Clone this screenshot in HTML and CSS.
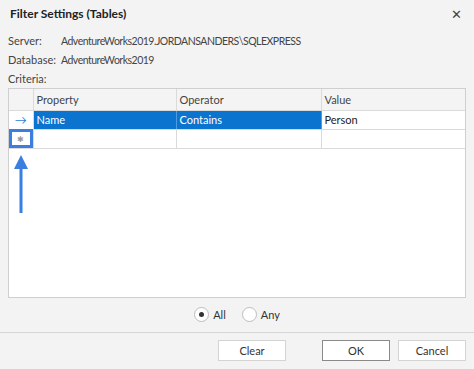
FILE: index.html
```html
<!DOCTYPE html>
<html lang="en">
  <head>
    <meta charset="UTF-8" />
    <meta name="viewport" content="width=device-width, initial-scale=1.0" />
    <title>Filter Settings (Tables)</title>
    <link rel="stylesheet" href="styles.css">
  </head>
  <body>
    <div id="dialog">
      <div class="titlebar">
        <span class="title">Filter Settings (Tables)</span>
        <span class="close">&#x2715;</span>
      </div>
      <div class="info">
        <div class="inforow"><span class="label">Server:</span><span class="value">AdventureWorks2019.JORDANSANDERS\SQLEXPRESS</span></div>
        <div class="inforow"><span class="label">Database:</span><span class="value">AdventureWorks2019</span></div>
        <div class="inforow"><span class="label">Criteria:</span></div>
      </div>

      <div class="grid">
        <table>
          <tr class="head">
            <td class="ind"></td>
            <td>Property</td>
            <td>Operator</td>
            <td>Value</td>
          </tr>
          <tr class="selected">
            <td class="ind arrow">&rarr;</td>
            <td class="sel">Name</td>
            <td class="sel">Contains</td>
            <td>Person</td>
          </tr>
          <tr>
            <td class="ind newrow">&#x2731;</td>
            <td></td>
            <td></td>
            <td></td>
          </tr>
        </table>
        <!-- callout arrow pointing at the new row -->
        <svg class="callout" width="16" height="60" viewBox="0 0 16 60">
          <polygon points="8,0 15,14 1,14" fill="#3a7ee0" />
          <rect x="6.5" y="12" width="3" height="46" fill="#3a7ee0" />
        </svg>
      </div>

      <div class="options">
        <label class="radio"><span class="dot checked"></span>All</label>
        <label class="radio"><span class="dot"></span>Any</label>
      </div>

      <div class="buttons">
        <button class="btn">Clear</button>
        <span class="spacer"></span>
        <button class="btn default">OK</button>
        <button class="btn">Cancel</button>
      </div>
    </div>
  </body>
</html>
```

FILE: styles.css
```css
* {
  box-sizing: border-box;
  margin: 0;
  padding: 0;
}
body {
  width: 474px;
  height: 369px;
  overflow: hidden;
  background: #f3f3f3;
  font-family: Lato, "Noto Sans", sans-serif;
  font-size: 11px;
  color: #333;
}
#dialog {
  display: flex;
  flex-direction: column;
  height: 369px;
}
.titlebar {
  height: 27px;
  display: flex;
  align-items: center;
  justify-content: space-between;
  padding: 0 12px 0 10px;
}
.title {
  font-weight: bold;
  font-size: 12px;
  color: #222;
}
.close {
  font-size: 13px;
  color: #444;
}
.info {
  margin-top: 4px;
  padding-left: 8px;
}
.inforow {
  height: 19px;
  display: flex;
  align-items: center;
  color: #444;
}
.label {
  width: 53px;
}
.value {
  font-size: 10.5px;
  letter-spacing: -0.5px;
}
.grid {
  position: relative;
  margin: 0 8px;
  height: 210px;
  background: #fff;
  border: 1px solid #cfcfcf;
}
table {
  width: 100%;
  border-collapse: collapse;
  table-layout: fixed;
}
td {
  height: 19px;
  padding-left: 3px;
  border-right: 1px solid #dadada;
  border-bottom: 1px solid #dadada;
  white-space: nowrap;
  color: #222;
}
td:last-child {
  border-right: none;
}
td.ind {
  width: 24px;
  padding: 0;
  text-align: center;
}
td:nth-child(2) {
  width: 143px;
}
td:nth-child(3) {
  width: 145px;
}
.head td {
  height: 21px;
  background: #f4f4f4;
  color: #444;
}
.sel {
  background: #0a74cf;
  color: #fff;
  border-right-color: #4d9be0;
}
.arrow {
  color: #2f7bd8;
  font-size: 12px;
  line-height: 1;
}
.newrow {
  color: #999;
  font-size: 8px;
  outline: 3px solid #3a7ee0;
  outline-offset: -3px;
}
.callout {
  position: absolute;
  left: 4px;
  top: 66px;
}
.options {
  height: 34px;
  display: flex;
  align-items: center;
  justify-content: center;
  gap: 16px;
  padding-bottom: 2px;
}
.radio {
  display: flex;
  align-items: center;
  gap: 4px;
  color: #333;
}
.dot {
  width: 15px;
  height: 15px;
  border-radius: 50%;
  border: 1px solid #bdbdbd;
  background: #fff;
  display: flex;
  align-items: center;
  justify-content: center;
}
.dot.checked::after {
  content: "";
  width: 5px;
  height: 5px;
  border-radius: 50%;
  background: #333;
}
.buttons {
  border-top: 1px solid #d6d6d6;
  display: flex;
  justify-content: flex-end;
  padding: 7px 8px 0 0;
  gap: 8px;
}
.spacer {
  width: 20px;
}
.btn {
  width: 68px;
  height: 21px;
  background: #fff;
  border: 1px solid #d4d4d4;
  font-family: inherit;
  font-size: 11px;
  color: #333;
}
.btn.default {
  border-color: #8a8a8a;
}
```
